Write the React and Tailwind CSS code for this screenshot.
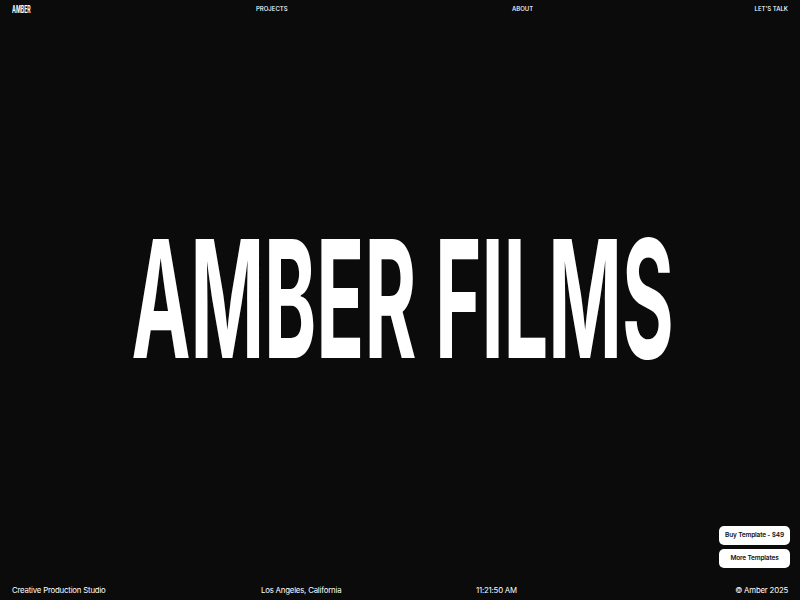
import React from "react";

const sans = "font-['Inter','Liberation_Sans',sans-serif]";

export default function App() {
    return (
        <div className={`relative flex h-screen w-full flex-col overflow-hidden bg-[#0b0b0b] text-white antialiased ${sans}`}>
            <header className="flex h-[17px] items-center px-3 text-[6px] font-medium uppercase leading-none">
                <div className="w-[244px]">
                    <span className="inline-block origin-left scale-x-[0.52] text-[10px] font-bold">AMBER</span>
                </div>
                <a href="#projects" className="w-[256px]">Projects</a>
                <a href="#about" className="flex-1">About</a>
                <a href="#contact">Let's Talk</a>
            </header>

            <main className="flex flex-1 items-center justify-center pl-[6px]">
                <h1 className="inline-block scale-x-[0.482] whitespace-nowrap text-[164px] font-bold leading-none">
                    AMBER FILMS
                </h1>
            </main>

            <footer className="flex h-[19px] items-center px-3 text-[7.8px] leading-none tracking-tight">
                <div className="w-[249px]">Creative Production Studio</div>
                <div className="w-[215px]">Los Angeles, California</div>
                <div className="flex-1">11:21:50 AM</div>
                <div>© Amber 2025</div>
            </footer>

            <div className="absolute bottom-[32px] right-[10px] flex w-[71px] flex-col gap-1">
                <button type="button" className="h-[19px] rounded-[5px] bg-white text-[6.5px] font-semibold tracking-tight text-[#111]">
                    Buy Template - $49
                </button>
                <button type="button" className="h-[19px] rounded-[5px] bg-white text-[6.5px] font-semibold tracking-tight text-[#111]">
                    More Templates
                </button>
            </div>
        </div>
    );
}
